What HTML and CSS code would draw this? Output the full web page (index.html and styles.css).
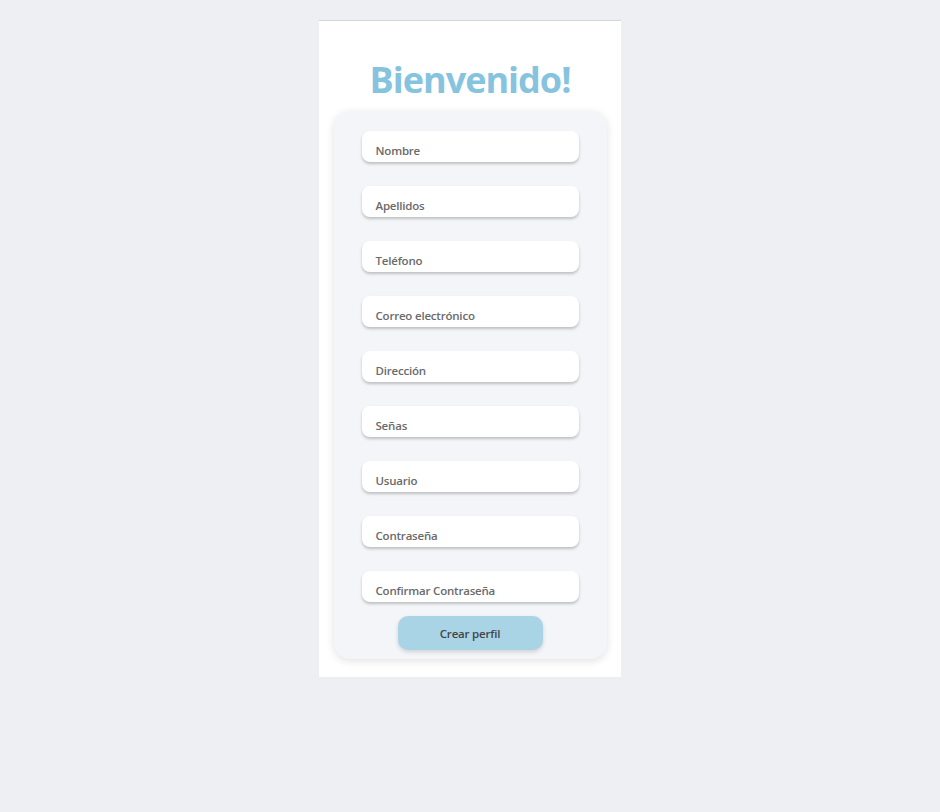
FILE: index.html
```html
<!DOCTYPE html>
<html lang="es">
<head>
<meta charset="utf-8">
<title>Crear perfil</title>
<link rel="stylesheet" href="styles.css">
</head>
<body>
<main class="panel">
  <h1 class="title">Bienvenido!</h1>
  <form class="card">
    <div class="field"><span class="label">Nombre</span></div>
    <div class="field"><span class="label">Apellidos</span></div>
    <div class="field"><span class="label">Teléfono</span></div>
    <div class="field"><span class="label">Correo electrónico</span></div>
    <div class="field"><span class="label">Dirección</span></div>
    <div class="field"><span class="label">Señas</span></div>
    <div class="field"><span class="label">Usuario</span></div>
    <div class="field"><span class="label">Contraseña</span></div>
    <div class="field"><span class="label">Confirmar Contraseña</span></div>
    <button type="button" class="btn">Crear perfil</button>
  </form>
</main>
</body>
</html>
```
FILE: styles.css
```css
html, body {
  margin: 0;
  padding: 0;
}
body {
  background: #eeeff3;
  font-family: "Open Sans", "Noto Sans", sans-serif;
  display: flex;
  justify-content: center;
  padding-top: 20px;
  min-height: 812px;
  box-sizing: border-box;
}
.panel {
  width: 302px;
  height: 657px;
  background: #ffffff;
  border-top: 1px solid #d3d4dc;
  box-sizing: border-box;
  display: flex;
  flex-direction: column;
  align-items: center;
}
.title {
  margin: 33px 0 5px;
  height: 52px;
  font-size: 36px;
  font-weight: 700;
  color: #86c3df;
  letter-spacing: -1px;
  line-height: 52px;
}
.card {
  width: 273px;
  background: #f4f5f9;
  border-radius: 16px;
  box-shadow: 0 2px 8px rgba(0, 0, 0, 0.12);
  padding: 20px 0 9px;
  box-sizing: border-box;
  display: flex;
  flex-direction: column;
  align-items: center;
  gap: 24px;
}
.field {
  width: 217px;
  height: 31px;
  background: #ffffff;
  border-radius: 8px;
  box-shadow: 0 2px 3px rgba(0, 0, 0, 0.22);
  box-sizing: border-box;
  padding: 0 14px 4px;
  display: flex;
  align-items: flex-end;
}
.label {
  font-size: 11.5px;
  font-weight: 600;
  color: #6a6a6a;
  letter-spacing: -0.2px;
  line-height: 14px;
}
.btn {
  margin-top: -10px;
  width: 145px;
  height: 34px;
  border: none;
  border-radius: 10px;
  background: #a9d4e6;
  box-shadow: 0 2px 4px rgba(0, 0, 0, 0.15);
  font-family: inherit;
  font-size: 11.5px;
  font-weight: 600;
  color: #444444;
  letter-spacing: -0.2px;
}
```
